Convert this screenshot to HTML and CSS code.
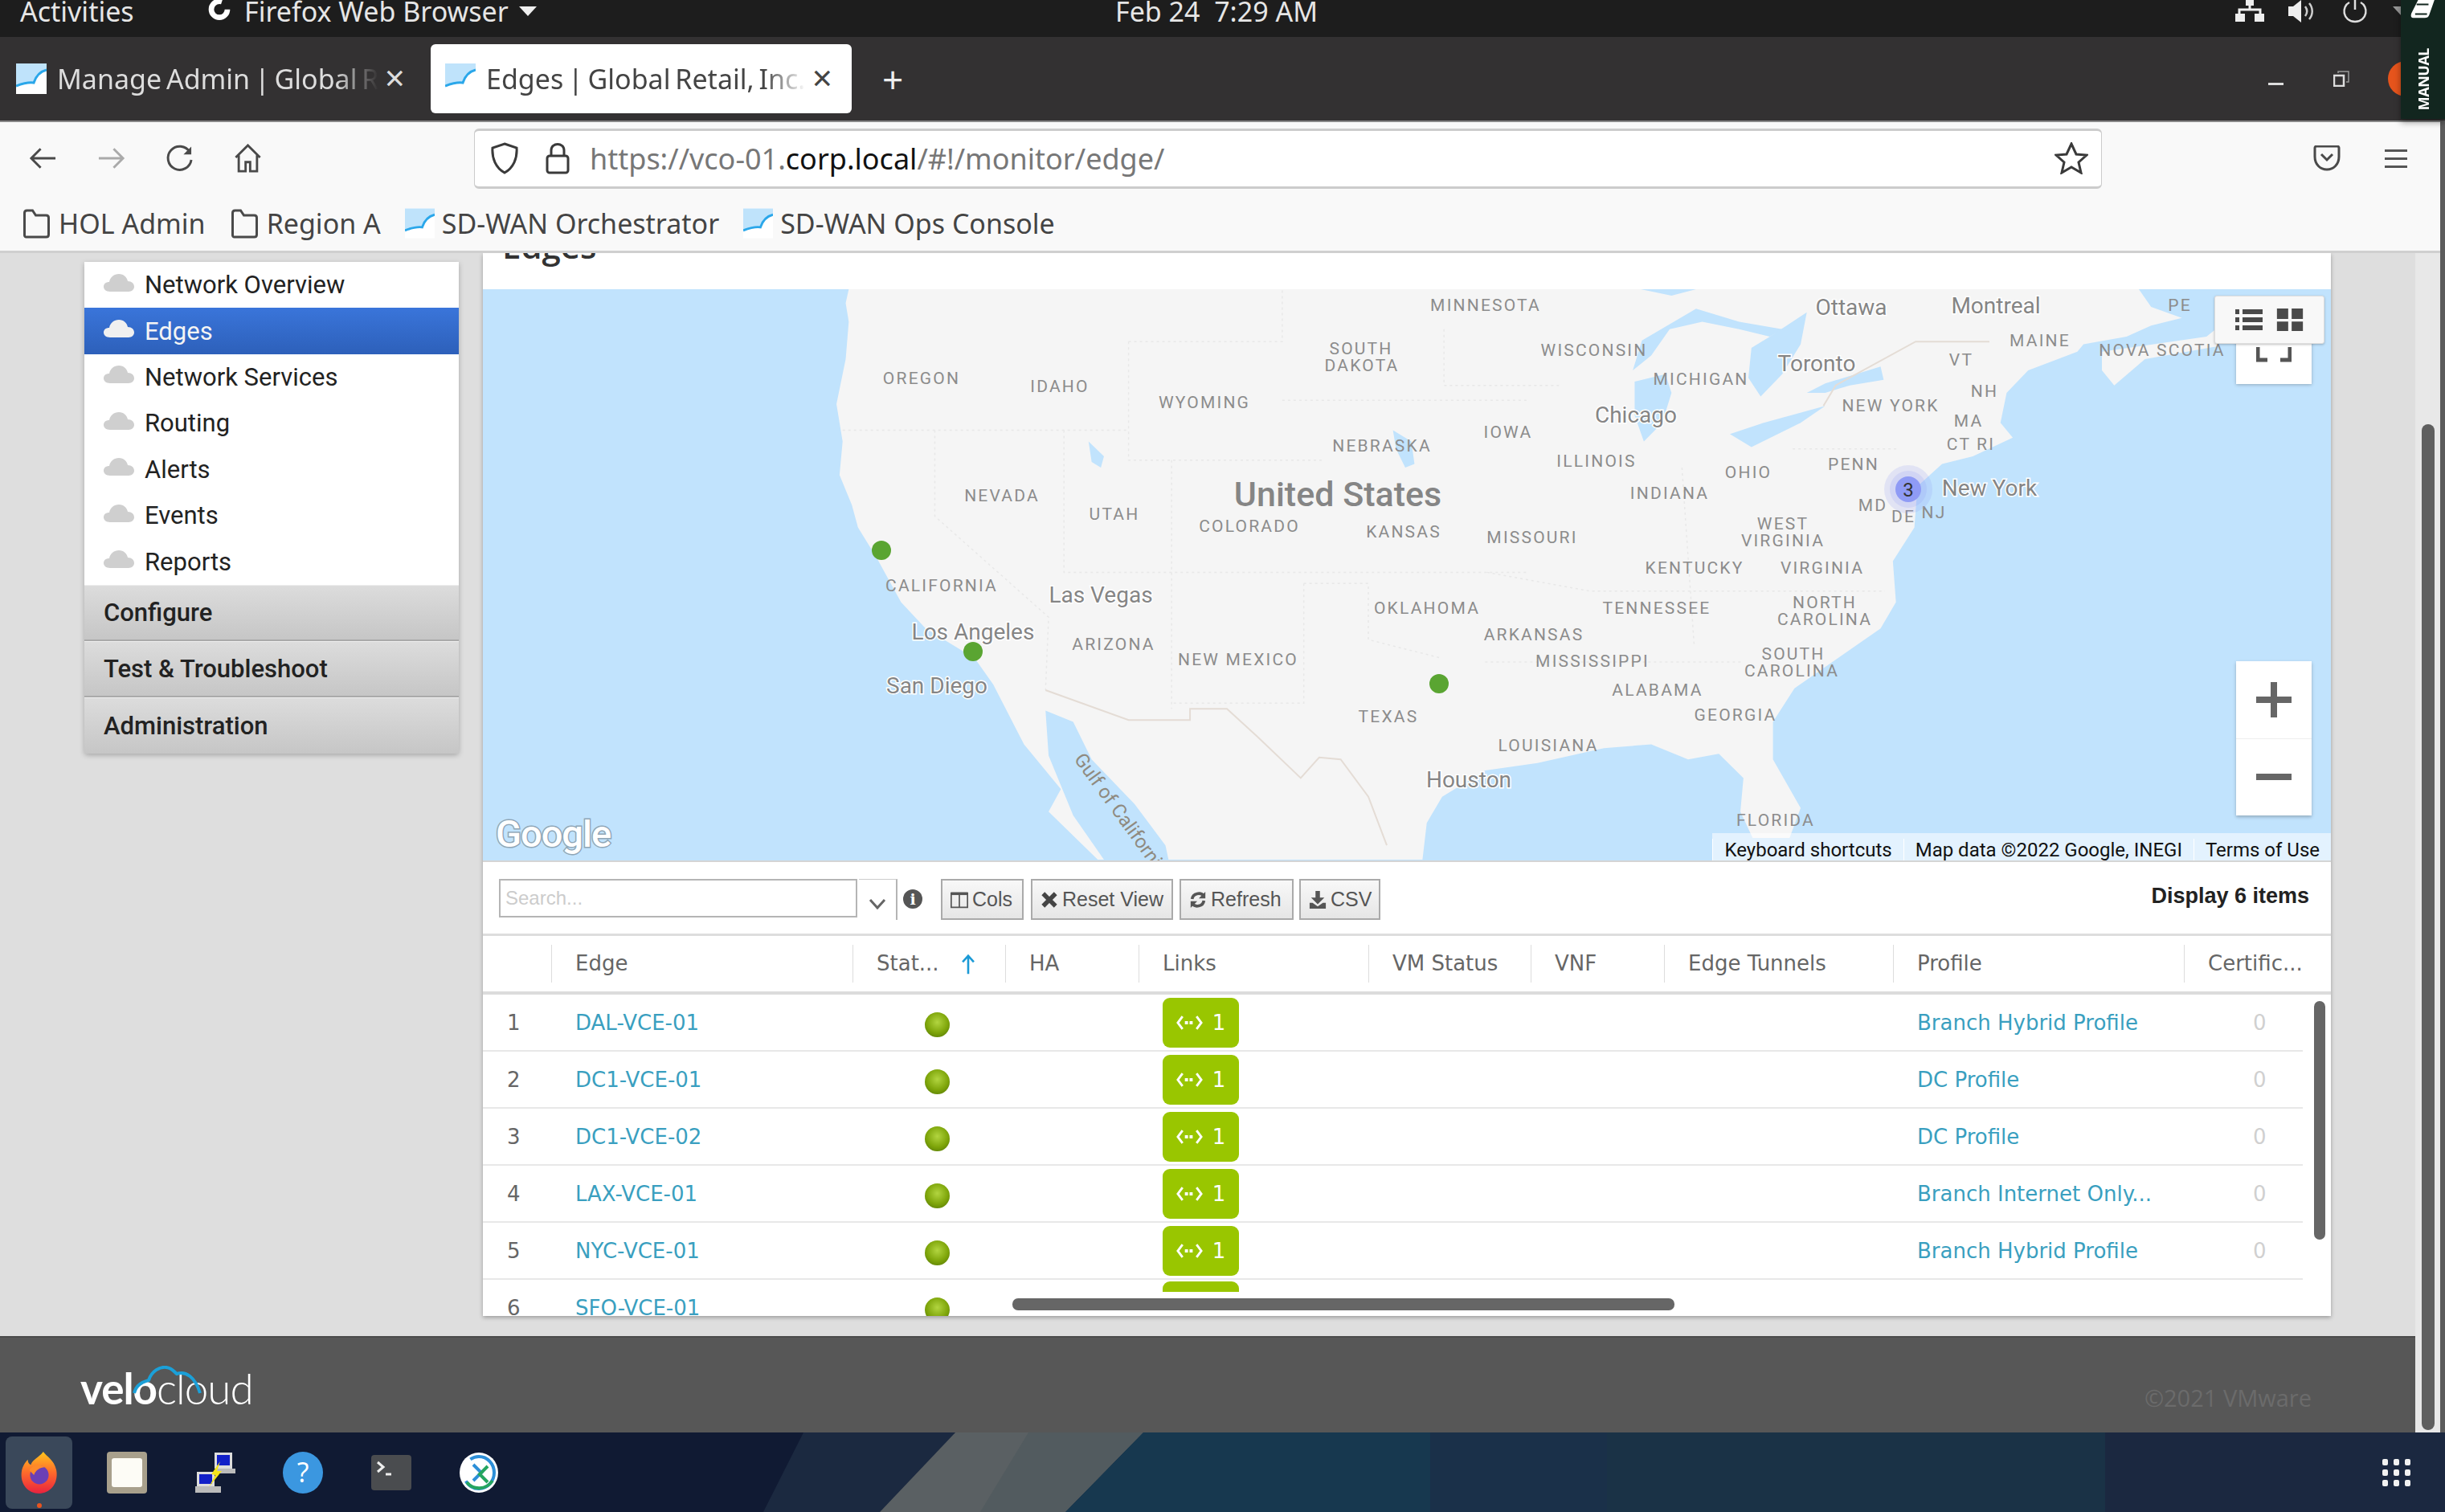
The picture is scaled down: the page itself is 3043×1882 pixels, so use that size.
FILE: index.html
```html
<!DOCTYPE html>
<html lang="en">
<head>
    <meta charset="UTF-8">
    <title>Edges | Global Retail, Inc.</title>
    <link rel="stylesheet" href="styles.css">
</head>
<body>
    <svg class="defs" aria-hidden="true">
        <symbol id="favicon" viewBox="0 0 38 38">
            <rect width="38" height="38" fill="#fff"/>
            <path d="M0 0H38V8C30 10 26 14 23 23C16 22 8 25 0 27Z" fill="#bfe3fb"/>
            <path d="M0 28C8 25 16 23 22 24C25 15 30 10 38 8" fill="none" stroke="#2aa7ea" stroke-width="3"/>
        </symbol>
        <symbol id="folder" viewBox="0 0 36 38">
            <path d="M3 34V6C3 4 4 3 6 3H13L17 9H30C32 9 33 10 33 12V33C33 35 32 36 30 36H5C4 36 3 35 3 34Z" fill="none" stroke="#4a4a4a" stroke-width="3"/>
        </symbol>
        <symbol id="cloud" viewBox="0 0 38 22">
            <path d="M8 22C3 22 0 19 0 16C0 12 3 10 7 10C8 4 13 0 19 0C25 0 29 4 30 9C35 9 38 12 38 16C38 19 35 22 31 22Z" fill="currentColor"/>
        </symbol>
        <symbol id="link-arrows" viewBox="0 0 34 20">
            <path d="M8 2L2 10L8 18M26 2L32 10L26 18" fill="none" stroke="#fff" stroke-width="3"/>
            <path d="M11 10H23" stroke="#fff" stroke-width="4" stroke-dasharray="4 2"/>
        </symbol>
    </svg>

    <div class="topbar">
        <span class="topbar-item">Activities</span>
        <span class="topbar-app">
            <svg class="app-spin" viewBox="0 0 36 36"><circle cx="18" cy="14" r="12" fill="none" stroke="#fff" stroke-width="8" stroke-dasharray="60 16"/></svg>
            Firefox Web Browser
            <span class="caret"></span>
        </span>
        <span class="topbar-clock">Feb 24&nbsp;&nbsp;7:29 AM</span>
        <span class="topbar-icons">
            <svg class="tray-net" viewBox="0 0 36 28"><path d="M18 0V12M5 20V12H31V20" fill="none" stroke="#eee" stroke-width="3"/><rect x="13" y="0" width="10" height="7" fill="#eee"/><rect x="0" y="17" width="12" height="10" fill="#eee"/><rect x="24" y="17" width="12" height="10" fill="#eee"/></svg>
            <svg class="tray-sound" viewBox="0 0 36 28"><path d="M0 8H6L16 0V28L6 20H0Z" fill="#eee"/><path d="M21 8C24 12 24 16 21 20M26 4C31 10 31 18 26 24" fill="none" stroke="#ccc" stroke-width="2.5"/></svg>
            <svg class="tray-power" viewBox="0 0 34 30"><path d="M10 3C0 8 1 26 17 27C33 26 34 8 24 3M17 0V12" fill="none" stroke="#ddd" stroke-width="2.5"/></svg>
            <span class="caret caret-dim"></span>
        </span>
    </div>

    <div class="tabbar">
        <div class="tab">
            <svg class="fav"><use href="#favicon"/></svg>
            <span class="tab-title">Manage Admin | Global R</span>
            <span class="tab-close">×</span>
        </div>
        <div class="tab tab-active">
            <svg class="fav"><use href="#favicon"/></svg>
            <span class="tab-title">Edges | Global Retail, Inc.</span>
            <span class="tab-close">×</span>
        </div>
        <span class="tab-new">+</span>
        <span class="win-min"></span>
        <svg class="win-restore" viewBox="0 0 20 20"><rect x="1" y="6" width="12" height="13" fill="none" stroke="#ddd" stroke-width="2.5"/><path d="M6 3V1H19V14H16" fill="none" stroke="#999" stroke-width="1.5"/></svg>
        <span class="win-close"></span>
    </div>

    <div class="manual">
        <svg class="manual-book" viewBox="0 0 34 26"><path d="M10 0H32L25 20C24 23 22 24 19 24H3C0 24 0 21 1 18Z" fill="#fff"/><path d="M8 6H24M6 19H22" stroke="#12261f" stroke-width="2"/></svg>
        <span class="manual-text">MANUAL</span>
    </div>

    <div class="window">
        <div class="browser-bar">
            <div class="navrow">
                <svg class="nav-icon" viewBox="0 0 36 30"><path d="M34 15H3M15 3L3 15L15 27" fill="none" stroke="#4a4a4a" stroke-width="3"/></svg>
                <svg class="nav-icon" viewBox="0 0 36 30"><path d="M2 15H33M21 3L33 15L21 27" fill="none" stroke="#aaa" stroke-width="3"/></svg>
                <svg class="nav-icon" viewBox="0 0 36 34"><path d="M31 9A15 15 0 1 0 33 19" fill="none" stroke="#4a4a4a" stroke-width="3"/><path d="M33 2V12H23Z" fill="#4a4a4a"/></svg>
                <svg class="nav-icon" viewBox="0 0 36 38"><path d="M2 18L18 2L34 18M6 15V36H15V24H21V36H30V15" fill="none" stroke="#4a4a4a" stroke-width="3"/></svg>
                <div class="urlbar">
                    <svg class="url-shield" viewBox="0 0 34 40"><path d="M17 2L32 7C33 20 28 32 17 38C6 32 1 20 2 7Z" fill="none" stroke="#3a3a3a" stroke-width="3"/></svg>
                    <svg class="url-lock" viewBox="0 0 30 40"><rect x="2" y="17" width="26" height="21" rx="3" fill="none" stroke="#3a3a3a" stroke-width="3"/><path d="M7 17V10C7 0 23 0 23 10V17" fill="none" stroke="#3a3a3a" stroke-width="3"/></svg>
                    <span class="url-text">https://vco-01.<b>corp.local</b>/#!/monitor/edge/</span>
                    <svg class="url-star" viewBox="0 0 42 40"><path d="M21 2L27 15L40 16L30 25L33 38L21 31L9 38L12 25L2 16L15 15Z" fill="none" stroke="#3a3a3a" stroke-width="3"/></svg>
                </div>
                <svg class="pocket" viewBox="0 0 34 32"><path d="M2 3C2 2 3 1 4 1H30C31 1 32 2 32 3V14C32 24 25 30 17 30C9 30 2 24 2 14Z" fill="none" stroke="#4a4a4a" stroke-width="3"/><path d="M10 11L17 18L24 11" fill="none" stroke="#4a4a4a" stroke-width="3"/></svg>
                <div class="burger"><i></i><i></i><i></i></div>
            </div>
            <div class="bookmarks">
                <span class="bm"><svg class="bm-icon"><use href="#folder"/></svg>HOL Admin</span>
                <span class="bm"><svg class="bm-icon"><use href="#folder"/></svg>Region A</span>
                <span class="bm"><svg class="bm-icon"><use href="#favicon"/></svg>SD-WAN Orchestrator</span>
                <span class="bm"><svg class="bm-icon"><use href="#favicon"/></svg>SD-WAN Ops Console</span>
            </div>
        </div>

        <div class="page">
            <div class="sidebar">
                <ul class="side-list">
                    <li><svg class="cloud"><use href="#cloud"/></svg>Network Overview</li>
                    <li class="current"><svg class="cloud"><use href="#cloud"/></svg>Edges</li>
                    <li><svg class="cloud"><use href="#cloud"/></svg>Network Services</li>
                    <li><svg class="cloud"><use href="#cloud"/></svg>Routing</li>
                    <li><svg class="cloud"><use href="#cloud"/></svg>Alerts</li>
                    <li><svg class="cloud"><use href="#cloud"/></svg>Events</li>
                    <li><svg class="cloud"><use href="#cloud"/></svg>Reports</li>
                </ul>
                <div class="side-head">Configure</div>
                <div class="side-head">Test &amp; Troubleshoot</div>
                <div class="side-head">Administration</div>
            </div>

            <div class="panel">
                <h1 class="panel-title">Edges</h1>
                <div class="map">
                    <svg class="map-svg" viewBox="0 0 2300 713">
                        <g transform="scale(.7653 .4655) translate(0 -43)">
                            <path class="land" d="M595 43L590 80L595 130L590 230L575 350L585 450L580 540L600 620L610 680L640 760L680 880L720 950L800 1030L830 1100L880 1260L940 1380L920 1440L1000 1568L1528 1568L1535 1470L1560 1400L1630 1330L1715 1310L1823 1270L1900 1260L1960 1300L2010 1285L2050 1350L2045 1440L2065 1510L2125 1510L2143 1430L2098 1300L2098 1200L2133 1110L2203 1030L2273 950L2298 880L2293 770L2328 680L2333 570L2373 510L2423 490L2488 440L2468 400L2478 320L2513 260L2593 210L2603 190L2673 170L2713 140L2763 120L2713 90L2693 43Z"/>
                            <path class="land" d="M2633 210L2803 170L2833 130L2823 195L2703 230L2653 300L2633 260Z"/>
                            <path class="water" d="M915 1170L960 1200L990 1300L1060 1420L1110 1530L1115 1568L1010 1568L960 1450L920 1290Z"/>
                            <path class="water" d="M1873 290L1923 270L1933 320L1918 400L1888 450L1873 380Z"/>
                            <path class="water" d="M1870 260L1885 180L1973 95L2043 130L2113 150L2093 170L2043 150L1983 130L1930 150L1900 220Z"/>
                            <path class="water" d="M2093 170L2153 105L2143 190L2113 270L2078 330L2058 280L2063 200Z"/>
                            <path class="water" d="M2028 430L2083 400L2183 355L2143 400L2063 465Z"/>
                            <path class="water" d="M2153 320L2183 295L2273 250L2278 285L2223 300L2183 320Z"/>
                            <path class="water" d="M1883 43L1933 60L1973 43ZM1480 420L1510 450L1515 510L1500 520L1485 470Z"/>
                            <path class="water" d="M985 450L1010 490L1005 520L990 505Z"/>
                            <path class="border" d="M1050 183H1300V43M1050 183V500H1365M585 420H1050M945 420V800H1700M1120 500V1165M735 420V650L920 920L915 1115M1335 830H1440V980L1560 1030M1335 830V1150H1120M1300 340H1700M1563 150V300H1750M1633 800L1800 850H2280M1950 520L1970 1000M1630 1040H2050M2130 470H2300"/>
                            <path class="frontier" d="M915 1115L1050 1195H1150V1165H1210L1260 1240L1330 1350L1360 1295L1395 1300L1440 1400L1470 1530M2180 355L2200 300L2330 183H2450"/>
                        </g>
                        <g class="states">
                            <text x="546" y="118">OREGON</text>
                            <text x="718" y="128">IDAHO</text>
                            <text x="898" y="148">WYOMING</text>
                            <text x="1093" y="81">SOUTH</text>
                            <text x="1094" y="102">DAKOTA</text>
                            <text x="1119" y="202">NEBRASKA</text>
                            <text x="646" y="264">NEVADA</text>
                            <text x="786" y="287">UTAH</text>
                            <text x="954" y="302">COLORADO</text>
                            <text x="1146" y="309">KANSAS</text>
                            <text x="571" y="376">CALIFORNIA</text>
                            <text x="785" y="449">ARIZONA</text>
                            <text x="940" y="468">NEW MEXICO</text>
                            <text x="1175" y="404">OKLAHOMA</text>
                            <text x="1127" y="539">TEXAS</text>
                            <text x="1248" y="27">MINNESOTA</text>
                            <text x="2112" y="27">PE</text>
                            <text x="1383" y="83">WISCONSIN</text>
                            <text x="1516" y="119">MICHIGAN</text>
                            <text x="1938" y="71">MAINE</text>
                            <text x="2090" y="83">NOVA SCOTIA</text>
                            <text x="1840" y="95">VT</text>
                            <text x="1869" y="134">NH</text>
                            <text x="1752" y="152">NEW YORK</text>
                            <text x="1849" y="171">MA</text>
                            <text x="1852" y="200">CT RI</text>
                            <text x="1276" y="185">IOWA</text>
                            <text x="1386" y="221">ILLINOIS</text>
                            <text x="1575" y="235">OHIO</text>
                            <text x="1706" y="225">PENN</text>
                            <text x="1477" y="261">INDIANA</text>
                            <text x="1730" y="276">MD</text>
                            <text x="1768" y="290">DE</text>
                            <text x="1806" y="285">NJ</text>
                            <text x="1306" y="316">MISSOURI</text>
                            <text x="1618" y="299">WEST</text>
                            <text x="1618" y="320">VIRGINIA</text>
                            <text x="1508" y="354">KENTUCKY</text>
                            <text x="1667" y="354">VIRGINIA</text>
                            <text x="1461" y="404">TENNESSEE</text>
                            <text x="1670" y="397">NORTH</text>
                            <text x="1670" y="418">CAROLINA</text>
                            <text x="1308" y="437">ARKANSAS</text>
                            <text x="1631" y="461">SOUTH</text>
                            <text x="1629" y="482">CAROLINA</text>
                            <text x="1381" y="470">MISSISSIPPI</text>
                            <text x="1462" y="506">ALABAMA</text>
                            <text x="1559" y="537">GEORGIA</text>
                            <text x="1326" y="575">LOUISIANA</text>
                            <text x="1609" y="668">FLORIDA</text>
                        </g>
                        <g class="cities">
                            <text x="769" y="390">Las Vegas</text>
                            <text x="610" y="436">Los Angeles</text>
                            <text x="565" y="503">San Diego</text>
                            <text x="1227" y="620">Houston</text>
                            <text x="1703" y="32">Ottawa</text>
                            <text x="1883" y="30">Montreal</text>
                            <text x="1660" y="102">Toronto</text>
                            <text x="1435" y="166">Chicago</text>
                            <text x="1875" y="257">New York</text>
                        </g>
                        <text class="country" x="1064" y="270">United States</text>
                        <text class="gulf" transform="translate(735 585) rotate(54)">Gulf of California</text>
                        <circle class="pin" cx="496" cy="325" r="12"/>
                        <circle class="pin" cx="610" cy="451" r="12"/>
                        <circle class="pin" cx="1190" cy="491" r="12"/>
                        <circle class="ring" cx="1774" cy="249" r="30"/>
                        <circle class="ring" cx="1774" cy="249" r="23"/>
                        <circle class="cluster" cx="1774" cy="249" r="16"/>
                        <text class="cluster-num" x="1774" y="258">3</text>
                        <text class="google" x="16" y="694">Google</text>
                    </svg>
                    <div class="map-fullscreen"><svg viewBox="0 0 44 20"><path d="M2 0V16H14M42 0V16H30" fill="none" stroke="#555" stroke-width="5"/></svg></div>
                    <div class="map-toggle">
                        <svg viewBox="0 0 34 26"><path d="M0 3H5M9 3H34M0 13H5M9 13H34M0 23H5M9 23H34" stroke="#4a4a4a" stroke-width="6"/></svg>
                        <svg viewBox="0 0 30 26"><path d="M0 0H13V12H0ZM17 0H30V12H17ZM0 15H13V26H0ZM17 15H30V26H17Z" fill="#4a4a4a"/></svg>
                    </div>
                    <div class="map-zoom">
                        <span class="zoom-btn">
                            <svg viewBox="0 0 44 44"><path d="M22 0V44M0 22H44" stroke="#666" stroke-width="8"/></svg>
                        </span>
                        <span class="zoom-btn">
                            <svg viewBox="0 0 44 44"><path d="M0 22H44" stroke="#666" stroke-width="8"/></svg>
                        </span>
                    </div>
                    <div class="map-attr">
                        <span>Keyboard shortcuts</span>
                        <span>Map data ©2022 Google, INEGI</span>
                        <span>Terms of Use</span>
                    </div>
                </div>

                <div class="grid-tools">
                    <input class="search" type="text" placeholder="Search...">
                    <span class="search-drop"><svg viewBox="0 0 22 14"><path d="M2 2L11 12L20 2" fill="none" stroke="#666" stroke-width="3"/></svg></span>
                    <span class="info">i</span>
                    <span class="tool-btn btn-cols"><svg viewBox="0 0 26 24"><path d="M1 2H25V23H1ZM13 2V23" fill="none" stroke="#555" stroke-width="2"/><path d="M1 1H25V5H1Z" fill="#555"/></svg>Cols</span>
                    <span class="tool-btn btn-reset"><svg viewBox="0 0 20 20"><path d="M3 3L17 17M17 3L3 17" stroke="#444" stroke-width="5"/></svg>Reset View</span>
                    <span class="tool-btn btn-refresh"><svg viewBox="0 0 24 24"><path d="M4 11C5 3 16 1 20 7M20 13C19 21 8 23 4 17" fill="none" stroke="#555" stroke-width="4"/><path d="M22 1V10H13ZM2 23V14H11Z" fill="#555"/></svg>Refresh</span>
                    <span class="tool-btn btn-csv"><svg viewBox="0 0 24 24"><path d="M9 0H15V9H21L12 18L3 9H9Z" fill="#555"/><path d="M1 16H5L12 21L19 16H23V24H1Z" fill="#555"/></svg>CSV</span>
                    <span class="display-count">Display 6 items</span>
                </div>

                <div class="grid">
                    <div class="grid-head">
                        <span class="col"></span>
                        <span class="col">Edge</span>
                        <span class="col col-sort">Stat...<svg class="sort-arrow" viewBox="0 0 20 30"><path d="M10 29V3M2 12L10 3L18 12" fill="none" stroke="#1b9ad6" stroke-width="3"/></svg></span>
                        <span class="col">HA</span>
                        <span class="col">Links</span>
                        <span class="col">VM Status</span>
                        <span class="col">VNF</span>
                        <span class="col">Edge Tunnels</span>
                        <span class="col">Profile</span>
                        <span class="col">Certific...</span>
                    </div>
                    <div class="grid-row">
                        <span class="cell-num">1</span><a class="cell-link">DAL-VCE-01</a><span class="cell-status"><i class="ball"></i></span><span></span>
                        <span class="badge"><svg><use href="#link-arrows"/></svg>1</span>
                        <span></span><span></span><span></span><a class="cell-link">Branch Hybrid Profile</a><span class="cell-zero">0</span>
                    </div>
                    <div class="grid-row">
                        <span class="cell-num">2</span><a class="cell-link">DC1-VCE-01</a><span class="cell-status"><i class="ball"></i></span><span></span>
                        <span class="badge"><svg><use href="#link-arrows"/></svg>1</span>
                        <span></span><span></span><span></span><a class="cell-link">DC Profile</a><span class="cell-zero">0</span>
                    </div>
                    <div class="grid-row">
                        <span class="cell-num">3</span><a class="cell-link">DC1-VCE-02</a><span class="cell-status"><i class="ball"></i></span><span></span>
                        <span class="badge"><svg><use href="#link-arrows"/></svg>1</span>
                        <span></span><span></span><span></span><a class="cell-link">DC Profile</a><span class="cell-zero">0</span>
                    </div>
                    <div class="grid-row">
                        <span class="cell-num">4</span><a class="cell-link">LAX-VCE-01</a><span class="cell-status"><i class="ball"></i></span><span></span>
                        <span class="badge"><svg><use href="#link-arrows"/></svg>1</span>
                        <span></span><span></span><span></span><a class="cell-link">Branch Internet Only...</a><span class="cell-zero">0</span>
                    </div>
                    <div class="grid-row">
                        <span class="cell-num">5</span><a class="cell-link">NYC-VCE-01</a><span class="cell-status"><i class="ball"></i></span><span></span>
                        <span class="badge"><svg><use href="#link-arrows"/></svg>1</span>
                        <span></span><span></span><span></span><a class="cell-link">Branch Hybrid Profile</a><span class="cell-zero">0</span>
                    </div>
                    <div class="grid-row">
                        <span class="cell-num">6</span><a class="cell-link">SFO-VCE-01</a><span class="cell-status"><i class="ball"></i></span><span></span>
                        <span class="badge badge-cut"></span>
                    </div>
                    <div class="scroll-v"></div>
                    <div class="scroll-h"></div>
                </div>
            </div>
        </div>

        <div class="footer">
            <div class="velo">
                <svg class="velo-arc" viewBox="0 0 86 36"><path d="M2 34C5 22 14 20 20 18C24 6 34 1 42 2C50 3 52 8 55 10C66 6 78 14 84 34" fill="none" stroke="#1ba0d8" stroke-width="4"/></svg>
                <b>velo</b><span>cloud</span>
            </div>
            <span class="copyright">©2021 VMware</span>
        </div>

        <div class="page-scroll"><div class="page-thumb"></div></div>
    </div>

    <div class="dock">
        <svg class="dock-wall" viewBox="0 0 3043 99" preserveAspectRatio="none">
            <path d="M1000 0H1189L1095 99H950Z" fill="#1b2940"/>
            <path d="M1189 0H1423L1326 99H1095Z" fill="#5a6063"/>
            <path d="M1280 0H1423L1326 99H1220Z" fill="#525b5f"/>
            <path d="M1423 0H1800L1780 99H1326Z" fill="#17384f"/>
            <path d="M1780 0H2000V99H1780Z" fill="#1a3049"/>
            <path d="M2000 0H2620V99H2000Z" fill="#1a3246"/>
            <path d="M2620 0H3043V99H2620Z" fill="#1b2840"/>
        </svg>
        <span class="dock-item dock-active">
            <svg viewBox="0 0 50 54">
                <defs><linearGradient id="fx" x1="0" y1="0" x2="0" y2="1"><stop offset="0" stop-color="#ffc51d"/><stop offset=".5" stop-color="#ff6a2b"/><stop offset="1" stop-color="#e8223f"/></linearGradient></defs>
                <path d="M30 0C34 6 44 10 47 24C50 42 38 54 25 54C10 54 0 42 2 26C3 18 8 12 10 10C10 14 12 16 14 17C16 10 24 8 30 0Z" fill="url(#fx)"/>
                <circle cx="25" cy="30" r="12" fill="#6b3fb5"/>
                <path d="M12 24C16 16 28 16 32 20C26 20 20 24 18 30Z" fill="#ff8a2a"/>
            </svg>
            <i class="dock-dot"></i>
        </span>
        <span class="dock-item">
            <svg viewBox="0 0 50 52"><rect width="50" height="52" rx="4" fill="#a8a08c"/><rect x="6" y="8" width="38" height="36" rx="3" fill="#fdfcf6"/></svg>
        </span>
        <span class="dock-item">
            <svg viewBox="0 0 50 52"><rect x="24" y="1" width="22" height="20" fill="#ddd"/><rect x="27" y="4" width="16" height="13" fill="#1220c8"/><rect x="26" y="21" width="24" height="6" fill="#bbb"/><rect x="2" y="25" width="22" height="18" fill="#ddd"/><rect x="5" y="28" width="16" height="12" fill="#1220c8"/><rect x="0" y="43" width="32" height="8" fill="#bbb"/><path d="M31 12L20 28L25 29L17 44L33 24L27 24Z" fill="#f5e51b"/></svg>
        </span>
        <span class="dock-item">
            <svg viewBox="0 0 50 52"><ellipse cx="25" cy="26" rx="25" ry="26" fill="#3b97e0"/><text class="help-mark" x="25" y="38">?</text></svg>
        </span>
        <span class="dock-item">
            <svg viewBox="0 0 50 44"><rect width="50" height="44" rx="4" fill="#4a4c4f"/><path d="M8 9L15 15L8 21" fill="none" stroke="#eee" stroke-width="3"/><path d="M18 24H25" stroke="#eee" stroke-width="3"/></svg>
        </span>
        <span class="dock-item">
            <svg viewBox="0 0 50 52"><ellipse cx="25" cy="26" rx="24" ry="25" fill="#fff"/><ellipse cx="25" cy="26" rx="19" ry="20" fill="none" stroke="#2d8fd8" stroke-width="4" stroke-dasharray="50 30"/><path d="M10 38C18 48 34 48 42 36" fill="none" stroke="#25a560" stroke-width="4"/><path d="M18 16L28 26L18 36" fill="none" stroke="#2d8fd8" stroke-width="4"/><path d="M36 18L26 28L36 38" fill="none" stroke="#25a560" stroke-width="4"/></svg>
        </span>
        <span class="dock-grid"><i></i><i></i><i></i><i></i><i></i><i></i><i></i><i></i><i></i></span>
    </div>
</body>
</html>
```

FILE: styles.css
```css
* {
    box-sizing: border-box;
}

body {
    margin: 0;
    width: 3043px;
    height: 1882px;
    overflow: hidden;
    position: relative;
    display: flex;
    flex-direction: column;
    font-family: "Noto Sans", sans-serif;
    color: #333;
    background-color: #1b2840;
}

.defs {
    width: 0;
    height: 0;
    position: absolute;
}

/* desktop top bar */
.topbar {
    height: 46px;
    flex: none;
    display: flex;
    align-items: flex-start;
    background-color: #1d1d1d;
    color: #e6e6e6;
    font-size: 34px;
    line-height: 28px;
    padding-left: 25px;
    overflow: hidden;
}

.topbar-item {
    width: 230px;
}

.topbar-app {
    display: flex;
    align-items: flex-start;
    gap: 13px;
    width: 1133px;
    white-space: nowrap;
}

.app-spin {
    width: 36px;
    height: 30px;
}

.caret {
    width: 0;
    height: 0;
    margin: 8px 0 0 0;
    border-left: 11px solid transparent;
    border-right: 11px solid transparent;
    border-top: 12px solid #eee;
}

.caret-dim {
    border-top-color: #999;
}

.topbar-clock {
    width: 1394px;
    white-space: nowrap;
}

.topbar-icons {
    display: flex;
    gap: 30px;
}

.tray-net,
.tray-sound {
    width: 36px;
    height: 28px;
}

.tray-power {
    width: 34px;
    height: 30px;
}

/* firefox tabs */
.tabbar {
    height: 104px;
    flex: none;
    display: flex;
    align-items: flex-start;
    padding-top: 9px;
    background-color: #333132;
    color: #ddd;
    position: relative;
}

.tab {
    width: 536px;
    height: 86px;
    display: flex;
    align-items: center;
    padding-left: 20px;
    padding-right: 32px;
    font-size: 34px;
    word-spacing: -3px;
}

.tab-active {
    width: 524px;
    background-color: #fff;
    border-radius: 6px;
    color: #444;
    padding-left: 18px;
    padding-right: 24px;
}

.fav {
    width: 38px;
    height: 38px;
    flex: none;
    margin-right: 13px;
}

.tab-title {
    flex: 1;
    overflow: hidden;
    white-space: nowrap;
    -webkit-mask-image: linear-gradient(to right, #000 85%, transparent 98%);
    mask-image: linear-gradient(to right, #000 85%, transparent 98%);
}

.tab-close {
    font-size: 44px;
    line-height: 1;
    margin-top: -4px;
}

.tab-new {
    font-size: 46px;
    line-height: 86px;
    margin-left: 38px;
    color: #eee;
}

.win-min {
    position: absolute;
    left: 2823px;
    top: 57px;
    width: 19px;
    height: 3px;
    background-color: #ddd;
}

.win-restore {
    position: absolute;
    left: 2904px;
    top: 42px;
    width: 20px;
    height: 20px;
}

.win-close {
    position: absolute;
    left: 2972px;
    top: 30px;
    width: 44px;
    height: 44px;
    border-radius: 50%;
    background-color: #e6541c;
}

.manual {
    position: absolute;
    left: 2988px;
    top: 0;
    width: 55px;
    height: 148px;
    background-color: #12261f;
    box-shadow: 0 4px 8px rgba(0, 0, 0, 0.4);
    display: flex;
    flex-direction: column;
    align-items: center;
    z-index: 5;
}

.manual-book {
    width: 32px;
    height: 24px;
}

.manual-text {
    margin-top: 36px;
    writing-mode: vertical-rl;
    transform: rotate(180deg);
    font-family: "Open Sans", sans-serif;
    font-weight: 700;
    font-size: 18px;
    letter-spacing: -0.5px;
    color: #fff;
}

/* window body, dark strip on the right is the window edge */
.window {
    height: 1633px;
    flex: none;
    display: flex;
    flex-direction: column;
    border-right: 6px solid #5c5c5c;
    position: relative;
}

.browser-bar {
    height: 165px;
    flex: none;
    background-color: #f9f9f9;
    border-top: 2px solid #888;
    border-bottom: 3px solid #cfcfcf;
    position: relative;
    z-index: 2;
}

.navrow {
    height: 90px;
    display: flex;
    align-items: center;
    padding-left: 36px;
}

.nav-icon {
    width: 35px;
    height: 36px;
    margin-right: 50px;
    flex: none;
}

.urlbar {
    width: 2026px;
    height: 75px;
    margin-left: 212px;
    margin-left: 214px;
    flex: none;
    display: flex;
    align-items: center;
    background-color: #fff;
    border: 1px solid #ccc;
    border-top: 3px solid #ccc;
    border-bottom: 3px solid #ccc;
    border-radius: 6px;
    padding-left: 20px;
    padding-right: 16px;
}

.url-shield {
    width: 34px;
    height: 40px;
    flex: none;
}

.url-lock {
    width: 30px;
    height: 40px;
    margin-left: 34px;
    flex: none;
}

.url-text {
    margin-left: 25px;
    flex: 1;
    font-size: 36px;
    color: #777;
    white-space: nowrap;
}

.url-text b {
    font-weight: 400;
    color: #111;
}

.url-star {
    width: 42px;
    height: 40px;
    flex: none;
}

.pocket {
    width: 34px;
    height: 32px;
    margin-left: 263px;
    flex: none;
}

.burger {
    width: 28px;
    margin-left: 55px;
    display: flex;
    flex-direction: column;
    gap: 7px;
}

.burger i {
    height: 3px;
    background-color: #555;
}

.bookmarks {
    height: 70px;
    display: flex;
    align-items: center;
    padding-left: 27px;
    padding-top: 2px;
    gap: 30px;
    font-size: 34px;
    color: #444;
}

.bm {
    display: flex;
    align-items: center;
    gap: 9px;
    white-space: nowrap;
}

.bm-icon {
    width: 37px;
    height: 38px;
}

/* orchestrator page */
.page {
    flex: 1;
    min-height: 0;
    display: flex;
    align-items: flex-start;
    background-color: #dedede;
    padding-left: 105px;
    overflow: hidden;
    position: relative;
}

.sidebar {
    width: 466px;
    margin-top: 11px;
    flex: none;
    font-family: Roboto, sans-serif;
    font-size: 31px;
    color: #222;
    box-shadow: 0 2px 6px rgba(0, 0, 0, 0.25);
    border-radius: 0 0 4px 4px;
}

.side-list {
    list-style: none;
    margin: 0;
    padding: 0;
    background-color: #fff;
}

.side-list li {
    height: 57.4px;
    display: flex;
    align-items: center;
    padding-left: 24px;
}

.cloud {
    width: 38px;
    height: 22px;
    margin-right: 13px;
    margin-top: -6px;
    color: #cfcfcf;
}

.side-list .current {
    background: linear-gradient(#3a75da, #2d60ba);
    color: #f4f4f4;
}

.current .cloud {
    color: #f0f0f0;
}

.side-head {
    height: 70px;
    display: flex;
    align-items: center;
    padding-left: 24px;
    background: linear-gradient(#dcdcdc, #c6c6c6);
    border-bottom: 2px solid #aaa;
    border-top: 1px solid #eee;
    font-weight: 500;
}

.side-head:last-child {
    border-bottom: none;
}

.panel {
    width: 2300px;
    height: 1323px;
    margin-left: 30px;
    flex: none;
    background-color: #fff;
    box-shadow: 0 2px 5px rgba(0, 0, 0, 0.3);
    overflow: hidden;
}

.panel-title {
    margin: -33px 0 0 24px;
    height: 78px;
    font-family: "Open Sans", sans-serif;
    font-size: 42px;
    line-height: 48px;
    font-weight: 600;
    color: #333;
}

.map {
    height: 713px;
    position: relative;
    overflow: hidden;
    background-color: #c1e3fd;
    border-bottom: 2px solid #d5d5d5;
}

.map-svg {
    width: 2300px;
    height: 713px;
    display: block;
}

.land {
    fill: #f5f5f5;
}

.water {
    fill: #c1e3fd;
}

.border {
    fill: none;
    stroke: #e8e8e8;
    stroke-width: 1.5;
    stroke-dasharray: 3 4;
    vector-effect: non-scaling-stroke;
}

.frontier {
    fill: none;
    stroke: #e4dcd5;
    stroke-width: 2;
    vector-effect: non-scaling-stroke;
}

.states text {
    font-family: Roboto, sans-serif;
    font-size: 21px;
    letter-spacing: 2.2px;
    text-anchor: middle;
    fill: #8c8c8c;
}

.cities text {
    font-family: Roboto, sans-serif;
    font-size: 28px;
    text-anchor: middle;
    fill: #858585;
    stroke: #fff;
    stroke-width: 3px;
    paint-order: stroke;
}

.country {
    font-family: Roboto, sans-serif;
    font-weight: 500;
    font-size: 43px;
    text-anchor: middle;
    fill: #858585;
}

.gulf {
    font-family: Roboto, sans-serif;
    font-size: 24px;
    fill: #8f8a80;
}

.pin {
    fill: #5aa532;
}

.ring {
    fill: rgba(140, 150, 245, 0.18);
}

.cluster {
    fill: #8f9bf5;
}

.cluster-num {
    font-family: Roboto, sans-serif;
    font-size: 24px;
    text-anchor: middle;
    fill: #333;
}

.google {
    font-family: Roboto, sans-serif;
    font-weight: 500;
    font-size: 47px;
    fill: #fff;
    stroke: #8fa6b6;
    stroke-width: 3px;
    paint-order: stroke;
    letter-spacing: -1px;
}

.map-fullscreen {
    position: absolute;
    left: 2182px;
    top: 50px;
    width: 94px;
    height: 68px;
    background-color: #fff;
    box-shadow: 0 1px 4px rgba(0, 0, 0, 0.25);
    display: flex;
    align-items: flex-end;
    justify-content: center;
    padding-bottom: 26px;
}

.map-fullscreen svg {
    width: 44px;
    height: 20px;
}

.map-toggle {
    position: absolute;
    left: 2155px;
    top: 8px;
    width: 137px;
    height: 60px;
    background-color: #f8f8f8;
    border: 1px solid #ddd;
    border-radius: 3px;
    box-shadow: 0 1px 3px rgba(0, 0, 0, 0.25);
    display: flex;
    align-items: center;
    justify-content: center;
    gap: 17px;
}

.map-toggle svg {
    width: 34px;
    height: 28px;
}

.map-zoom {
    position: absolute;
    left: 2182px;
    top: 463px;
    width: 94px;
    height: 192px;
    background-color: #fff;
    box-shadow: 0 2px 4px rgba(0, 0, 0, 0.25);
    display: flex;
    flex-direction: column;
}

.zoom-btn {
    flex: 1;
    display: flex;
    align-items: center;
    justify-content: center;
}

.zoom-btn + .zoom-btn {
    border-top: 1px solid #eee;
}

.zoom-btn svg {
    width: 44px;
    height: 44px;
}

.map-attr {
    position: absolute;
    right: 0;
    bottom: 0;
    height: 34px;
    display: flex;
    align-items: center;
    padding-top: 8px;
    background-color: rgba(255, 255, 255, 0.55);
    font-family: Roboto, sans-serif;
    font-size: 24px;
    color: #111;
}

.map-attr span {
    padding: 0 14px;
    border-left: 1px solid #fff;
    white-space: nowrap;
}

/* grid toolbar */
.grid-tools {
    height: 92px;
    display: flex;
    align-items: flex-start;
    padding: 21px 0 0 20px;
    border-bottom: 3px solid #ddd;
    font-family: "Liberation Sans", sans-serif;
    font-size: 25px;
    color: #555;
}

.search {
    width: 446px;
    height: 48px;
    border: 2px solid #b5b5b5;
    background-color: #fff;
    font-family: "Liberation Sans", sans-serif;
    font-size: 24px;
    padding: 0 6px;
}

.search::placeholder {
    color: #ccc;
}

.search-drop {
    width: 48px;
    height: 51px;
    margin-left: 2px;
    display: flex;
    align-items: center;
    justify-content: center;
    border-right: 2px solid #b5b5b5;
    border-top: 1px solid #ccc;
}

.search-drop svg {
    width: 22px;
    height: 14px;
    margin-top: 10px;
}

.info {
    width: 24px;
    height: 24px;
    margin: 13px 23px 0 7px;
    border-radius: 50%;
    background-color: #555;
    color: #fff;
    font-family: "DejaVu Serif", serif;
    font-weight: 700;
    font-size: 19px;
    line-height: 24px;
    text-align: center;
}

.tool-btn {
    height: 51px;
    display: flex;
    align-items: center;
    gap: 5px;
    padding-left: 10px;
    background: linear-gradient(#f8f8f8, #e6e6e6);
    border: 2px solid #aaa;
    white-space: nowrap;
}

.tool-btn svg {
    width: 22px;
    height: 22px;
    flex: none;
}

.btn-cols {
    width: 103px;
    margin-right: 9px;
}

.btn-reset {
    width: 177px;
    margin-right: 8px;
}

.btn-refresh {
    width: 142px;
    margin-right: 7px;
}

.btn-csv {
    width: 101px;
}

.display-count {
    margin-left: auto;
    margin-right: 27px;
    margin-top: 6px;
    font-weight: 700;
    font-size: 27px;
    color: #222;
}

/* edges table */
.grid {
    position: relative;
    font-family: "DejaVu Sans", sans-serif;
    font-size: 26px;
    color: #666;
}

.grid-head {
    height: 73px;
    display: grid;
    grid-template-columns: 85px 375px 190px 166px 286px 202px 166px 285px 362px 183px;
    align-items: center;
    border-bottom: 4px solid #dcdcdc;
    white-space: nowrap;
}

.col {
    height: 47px;
    padding-left: 29px;
    line-height: 47px;
    border-left: 1px solid #ddd;
    color: #666;
    overflow: hidden;
    display: flex;
    align-items: center;
}

.col:first-child {
    border-left: none;
}

.sort-arrow {
    width: 20px;
    height: 26px;
    margin-left: 26px;
}

.grid-row {
    height: 71px;
    width: 2265px;
    display: grid;
    grid-template-columns: 85px 375px 190px 166px 286px 202px 166px 285px 362px 148px;
    align-items: center;
    border-bottom: 2px solid #e8e8e8;
    white-space: nowrap;
}

.cell-num {
    padding-left: 30px;
}

.cell-link {
    padding-left: 30px;
    color: #3a9fc0;
}

.cell-status {
    grid-column: 3;
    padding-left: 90px;
    display: flex;
}

.ball {
    width: 31px;
    height: 31px;
    margin-top: 5px;
    border-radius: 50%;
    background: radial-gradient(circle at 50% 40%, #b2d540, #7ea50a 55%, #4d6f06);
}

.badge {
    width: 95px;
    height: 62px;
    margin-left: 30px;
    border-radius: 9px;
    background-color: #99c600;
    color: #fff;
    display: flex;
    align-items: center;
    justify-content: center;
    gap: 12px;
}

.badge svg {
    width: 33px;
    height: 20px;
}

.badge-cut {
    height: 13px;
    align-self: start;
    margin-top: 2px;
    border-radius: 9px 9px 0 0;
}

.cell-zero {
    padding-left: 86px;
    color: #d0d0d0;
}

.scroll-v {
    position: absolute;
    left: 2279px;
    top: 81px;
    width: 14px;
    height: 297px;
    border-radius: 7px;
    background-color: #666;
}

.scroll-h {
    position: absolute;
    left: 659px;
    top: 451px;
    width: 824px;
    height: 15px;
    border-radius: 7px;
    background-color: #666;
}

/* right hand page scrollbar, runs over the footer too */
.page-scroll {
    position: absolute;
    left: 3006px;
    top: 165px;
    bottom: 0;
    width: 31px;
    background-color: #e8e8e8;
    padding-left: 8px;
    z-index: 3;
}

.page-thumb {
    margin-top: 213px;
    width: 16px;
    height: 1252px;
    border-radius: 8px;
    background-color: #5f5f5f;
}

.footer {
    height: 120px;
    flex: none;
    display: flex;
    align-items: center;
    justify-content: space-between;
    background-color: #575757;
    padding: 0 160px 0 100px;
    border-top: 2px solid #4b4b4b;
}

.velo {
    position: relative;
    font-family: Lato, sans-serif;
    font-size: 53px;
    line-height: 70px;
    color: #fff;
    margin-top: 8px;
    letter-spacing: -1px;
}

.velo b {
    font-weight: 700;
}

.velo span {
    font-weight: 300;
}

.velo-arc {
    position: absolute;
    left: 65px;
    top: 7px;
    width: 86px;
    height: 36px;
}

.copyright {
    font-family: "Open Sans", sans-serif;
    font-size: 29px;
    color: #6b6b6b;
    margin-top: 30px;
}

/* ubuntu dock */
.dock {
    flex: 1;
    min-height: 0;
    position: relative;
    display: flex;
    align-items: center;
    padding-left: 7px;
    background-color: #101a33;
}

.dock-wall {
    position: absolute;
    left: 0;
    top: 0;
    width: 100%;
    height: 100%;
}

.dock-item {
    position: relative;
    width: 83px;
    height: 90px;
    margin-right: 26.5px;
    display: flex;
    align-items: center;
    justify-content: center;
    border-radius: 8px;
}

.dock-item svg {
    width: 50px;
    height: 52px;
}

.dock-active {
    background-color: #3a485a;
}

.dock-dot {
    position: absolute;
    left: 39px;
    bottom: 1px;
    width: 6px;
    height: 6px;
    border-radius: 50%;
    background-color: #e9541f;
}

.help-mark {
    font-family: "Open Sans", sans-serif;
    font-size: 34px;
    text-anchor: middle;
    fill: #fff;
}

.dock-grid {
    position: absolute;
    left: 2965px;
    top: 33px;
    width: 35px;
    display: grid;
    grid-template-columns: repeat(3, 7px);
    grid-auto-rows: 8px;
    gap: 5px 7px;
}

.dock-grid i {
    background-color: #f2f2f2;
    border-radius: 2px;
}
```
